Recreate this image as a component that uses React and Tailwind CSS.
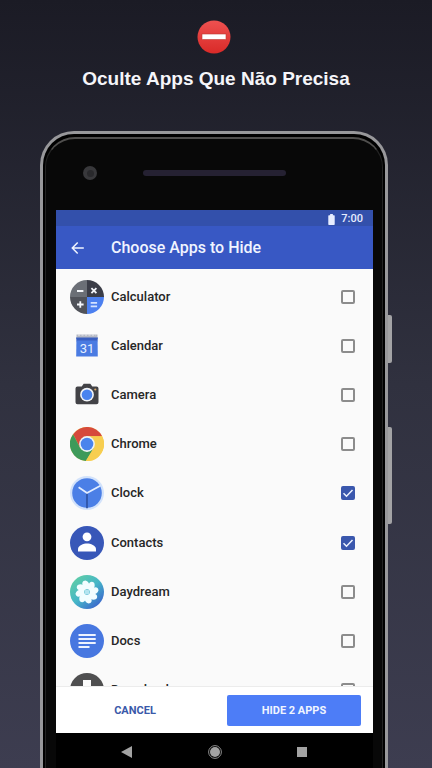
import { useState } from "react";

function CalculatorIcon() {
  return (
    <svg viewBox="0 0 34 34" className="size-[34px]" aria-hidden="true">
      <clipPath id="calc-clip"><circle cx="17" cy="17" r="17" /></clipPath>
      <g clipPath="url(#calc-clip)">
        <rect width="17" height="17" fill="#6b6f76" />
        <rect x="17" width="17" height="17" fill="#3b3d47" />
        <rect y="17" width="17" height="17" fill="#505259" />
        <rect x="17" y="17" width="17" height="17" fill="#4c80f0" />
      </g>
      <g stroke="#f4f6fa" strokeWidth="1.8" fill="none">
        <path d="M7 11h6.400M21.400 8.200l5 5M26.400 8.200l-5 5M7 24.500h6.600M10.300 21.200v6.600" />
        <path d="M20.700 22.800h6.400M20.700 26.300h6.400" stroke="#d3e2ff" />
      </g>
    </svg>
  );
}

function CalendarIcon() {
  return (
    <svg viewBox="0 0 34 34" className="size-[34px]" aria-hidden="true">
      <path d="M6.500 5.500h21v4h-21z" fill="#b5b9c4" />
      <path d="M8 6h18" stroke="#e6e7eb" strokeDasharray="2 1.500" />
      <path d="M6 8.500h22l-.6 4H6.600z" fill="#3a5fc0" />
      <path d="M6.400 11.500h21.200l.2 16H6.200z" fill="#4a7be2" />
      <text x="17" y="23.500" textAnchor="middle" fontSize="13" fill="#e6efff" className="font-['Roboto',sans-serif]">31</text>
    </svg>
  );
}

function CameraIcon() {
  return (
    <svg viewBox="0 0 34 34" className="size-[34px]" aria-hidden="true">
      <path d="M7.500 8.500h4.200l2-2.800h6.600l2 2.800h4.200a2 2 0 0 1 2 2v13.700a2 2 0 0 1-2 2h-19a2 2 0 0 1-2-2V10.500a2 2 0 0 1 2-2z" fill="#424246" />
      <circle cx="17" cy="16.700" r="6.900" fill="#f2f4f7" />
      <circle cx="17" cy="16.700" r="5.300" fill="#4a83ee" />
      <circle cx="25.300" cy="11.500" r="1.100" fill="#d8a768" />
    </svg>
  );
}

function ChromeIcon() {
  return (
    <svg viewBox="0 0 34 34" className="size-[34px]" aria-hidden="true">
      <circle cx="17" cy="17" r="17" fill="#f7ce50" />
      <path d="M17 9.200h15.100A17 17 0 0 0 3.100 7.200L10.200 20.900z" fill="#d64a3c" />
      <path d="M3.100 7.200A17 17 0 0 0 15.800 34l8-13.100-6.800 3.900-6.800-3.900z" fill="#3e9a5a" />
      <path d="M17 9.200h15.100A17 17 0 0 1 15.800 34l8-13.100z" fill="#f7ce50" />
      <circle cx="17" cy="17" r="7.900" fill="#eef3f6" />
      <circle cx="17" cy="17" r="6.300" fill="#4a84ec" />
    </svg>
  );
}

function ClockIcon() {
  return (
    <svg viewBox="0 0 34 34" className="size-[34px]" aria-hidden="true">
      <circle cx="17" cy="17" r="17" fill="#d2e2fb" />
      <circle cx="17" cy="17" r="14.800" fill="#4b7fe6" />
      <path d="M17 17v15.300" stroke="#3056a8" strokeWidth="1.800" />
      <path d="M8.600 11.200L17 17l13.300-7.300" fill="none" stroke="#e2edff" strokeWidth="1.800" />
    </svg>
  );
}

function ContactsIcon() {
  return (
    <svg viewBox="0 0 34 34" className="size-[34px]" aria-hidden="true">
      <circle cx="17" cy="17" r="17" fill="#3857b8" />
      <circle cx="17" cy="10.800" r="4.400" fill="#fff" />
      <path d="M8 25.500v-2.300c0-3.700 5.500-5.600 9-5.600s9 1.900 9 5.600v2.300z" fill="#fff" />
    </svg>
  );
}

const petals = [0, 45, 90, 135, 180, 225, 270, 315];

function DaydreamIcon() {
  return (
    <svg viewBox="0 0 34 34" className="size-[34px]" aria-hidden="true">
      <linearGradient id="dream" x1="0.1" y1="0.1" x2="0.85" y2="0.95">
        <stop offset="0" stopColor="#5fcda6" />
        <stop offset="0.5" stopColor="#45b6c8" />
        <stop offset="1" stopColor="#3a62cc" />
      </linearGradient>
      <circle cx="17" cy="17" r="17" fill="url(#dream)" />
      <circle cx="17" cy="17" r="5" fill="none" stroke="#f2fdff" strokeWidth="4" />
      {petals.map((angle) => (
        <path key={angle} d="M19.500 12.500C20 9.500 18.500 6.500 15.500 5.500 12.500 5.500 11.500 8.500 13 10.500 14 11.800 14.500 13 14.500 15z" fill="#f2fdff" transform={`rotate(${angle} 17 17)`} />
      ))}
      <circle cx="17" cy="17" r="2.600" fill="#b4e4f0" />
    </svg>
  );
}

function DocsIcon() {
  return (
    <svg viewBox="0 0 34 34" className="size-[34px]" aria-hidden="true">
      <circle cx="17" cy="17" r="17" fill="#4777e0" />
      <path d="M8.500 11h17.200M8.500 15h17.200M8.500 19h17.200M8.500 23h11" stroke="#edf3ff" strokeWidth="2" />
    </svg>
  );
}

function DownloadsIcon() {
  return (
    <svg viewBox="0 0 34 34" className="size-[34px]" aria-hidden="true">
      <circle cx="17" cy="17" r="17" fill="#4f4f50" />
      <path d="M13 7h8v6h5l-9 10-9-10h5z" fill="#fafafa" />
    </svg>
  );
}

const apps = [
  { name: "Calculator", Icon: CalculatorIcon },
  { name: "Calendar", Icon: CalendarIcon },
  { name: "Camera", Icon: CameraIcon },
  { name: "Chrome", Icon: ChromeIcon },
  { name: "Clock", Icon: ClockIcon },
  { name: "Contacts", Icon: ContactsIcon },
  { name: "Daydream", Icon: DaydreamIcon },
  { name: "Docs", Icon: DocsIcon },
  { name: "Downloads", Icon: DownloadsIcon },
];

function AppRow({ name, Icon, checked, onToggle }) {
  return (
    <li className="flex">
      <label className="flex flex-1 items-center pl-[14px] pr-[18px]">
        <Icon />
        <span className="ml-[7px] flex-1 text-[13px] leading-5 font-medium text-[#262626]">{name}</span>
        <span className="grid place-items-center">
          <input
            type="checkbox"
            checked={checked}
            onChange={onToggle}
            className="col-start-1 row-start-1 size-[14px] appearance-none rounded-[2px] border-2 border-[#8c8c8c] checked:border-[#3a57ad] checked:bg-[#3a57ad]"
          />
          {checked && (
            <svg viewBox="0 0 14 14" className="pointer-events-none col-start-1 row-start-1 size-[14px]" aria-hidden="true">
              <path d="M2.500 7.200l3 3 6-6.200" fill="none" stroke="#eef3ff" strokeWidth="1.500" />
            </svg>
          )}
        </span>
      </label>
    </li>
  );
}

export default function App() {
  const [hidden, setHidden] = useState(["Clock", "Contacts"]);
  const toggle = (name) =>
    setHidden((list) => (list.includes(name) ? list.filter((n) => n !== name) : [...list, name]));

  return (
    <div className="flex h-screen flex-col overflow-hidden bg-linear-to-b from-[#1b1b25] via-[#30313f] to-[#3d3d50] font-['Roboto',sans-serif]">
      <header className="flex flex-col items-center pt-5 pb-[38px] pr-1">
        <svg viewBox="0 0 34 34" className="size-[34px]" aria-hidden="true">
          <linearGradient id="stop-sign" x1="0" y1="0" x2="0" y2="1">
            <stop offset="0" stopColor="#ee5150" />
            <stop offset="1" stopColor="#d92a28" />
          </linearGradient>
          <circle cx="17" cy="17" r="16.500" fill="url(#stop-sign)" />
          <rect x="5" y="14" width="24" height="5.500" fill="#fff" stroke="#bd3b34" strokeWidth=".6" />
        </svg>
        <h1 className="mt-[11px] pl-1 text-center font-['Liberation_Sans',sans-serif] text-[19px] leading-7 font-bold text-[#f5f5f9]">
          Oculte Apps Que Não Precisa
        </h1>
      </header>

      <div className="flex min-h-0 flex-1 px-10">
        <div className="flex min-w-0 flex-1 rounded-t-[34px] border-x-3 border-t-3 border-[#98989b] bg-black px-[2px] pt-[3px]">
          <div className="flex min-w-0 flex-1 flex-col rounded-t-[30px] border-x border-t-2 border-x-[#232323] border-t-[#504f4e] bg-[#080808] pr-[9px] pl-[10px]">
            <div className="flex h-[71px] items-center pr-[87px] pb-[3px] pl-[27px]">
              <div className="grid size-[14px] place-items-center rounded-full bg-[#38383b]">
                <div className="size-[7px] rounded-full bg-[#29292c]" />
              </div>
              <div className="ml-[46px] h-[6px] flex-1 rounded-full bg-[#252132]" />
            </div>

            <main className="flex min-h-0 flex-1 flex-col bg-[#fafafa]">
              <div className="flex h-4 items-center justify-end gap-[6px] bg-[#3350ab] pt-[2px] pr-[10px] text-[#e7edff]">
                <svg viewBox="0 0 7 12" className="h-[11px] w-[7px]" aria-hidden="true">
                  <path d="M2 0h3v1.300h1.300q.7 0 .7.700v9.300q0 .7-.7.700H.7Q0 12 0 11.300V2q0-.7.7-.7H2z" fill="currentColor" />
                </svg>
                <span className="text-[11px] leading-4 font-medium">7:00</span>
              </div>
              <div className="flex h-[43px] items-center bg-[#3858c4] pt-px pl-[15px] text-[#f0f4ff]">
                <button type="button" aria-label="Back" className="size-[14px]">
                  <svg viewBox="0 0 14 14" className="size-[14px]">
                    <path d="M12.800 7H1.500M6.700 1.500L1.300 7l5.400 5.500" fill="none" stroke="currentColor" strokeWidth="1.500" />
                  </svg>
                </button>
                <h2 className="ml-[26px] text-[16px] leading-6 font-medium">Choose Apps to Hide</h2>
              </div>

              <div className="min-h-0 flex-1 overflow-hidden pt-[3px]">
                <ul className="grid h-[443px] grid-rows-9">
                  {apps.map(({ name, Icon }) => (
                    <AppRow key={name} name={name} Icon={Icon} checked={hidden.includes(name)} onToggle={() => toggle(name)} />
                  ))}
                </ul>
              </div>

              <footer className="flex h-[47px] shrink-0 items-center border-t border-[#ececec] bg-white pr-3">
                <button type="button" className="mr-[13px] h-[31px] flex-1 rounded-[2px] pt-[2px] text-[11px] leading-4 font-bold text-[#3a59a9]">
                  CANCEL
                </button>
                <button type="button" className="h-[31px] w-[134px] rounded-[2px] bg-[#4d7df7] pt-[2px] text-[11px] leading-4 font-bold text-[#f0f5ff]">
                  HIDE {hidden.length} APPS
                </button>
              </footer>
            </main>

            <nav className="flex h-[35px] shrink-0 items-center justify-between bg-black pt-[3px] pr-[66px] pl-[65px] text-[#a3a3a3]">
              <button type="button" aria-label="Back">
                <svg viewBox="0 0 11 12" className="h-3 w-[11px]"><path d="M11 0v12L0 6z" fill="currentColor" /></svg>
              </button>
              <button type="button" aria-label="Home">
                <svg viewBox="0 0 14 14" className="size-[14px]">
                  <circle cx="7" cy="7" r="6.400" fill="none" stroke="#8d8d8d" />
                  <circle cx="7" cy="7" r="5" fill="currentColor" />
                </svg>
              </button>
              <button type="button" aria-label="Recent apps" className="size-[10px] bg-[#a3a3a3]" />
            </nav>
          </div>
        </div>
        <div className="flex w-1 flex-col gap-16 pt-[184px]">
          <div className="h-12 rounded-r-[2px] bg-[#a3a3a5]" />
          <div className="h-[97px] rounded-r-[2px] bg-[#a3a3a5]" />
        </div>
      </div>
    </div>
  );
}
